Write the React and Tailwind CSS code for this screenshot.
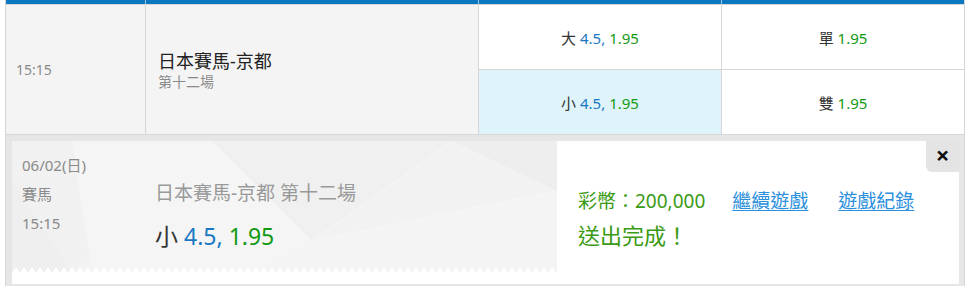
import React from "react";

const font = { fontFamily: '"Noto Sans", "Noto Sans CJK TC", sans-serif' };

function Odds({ label, line, price, big }) {
  return (
    <span className={big ? "text-[23px]" : "text-[15px]"}>
      <span className="text-[#333]">{label} </span>
      {line && <span className="text-[#1a78c2]">{line}, </span>}
      <span className="text-[#129a12]">{price}</span>
    </span>
  );
}

function Zigzag() {
  const teeth = [];
  for (let i = 0; i < 70; i++) {
    teeth.push(`${i * 8},6 ${i * 8 + 4},0 ${i * 8 + 8},6`);
  }
  return (
    <svg className="absolute left-0 bottom-0" width="545" height="6" viewBox="0 0 545 6">
      {teeth.map((p, i) => (
        <polygon key={i} points={p} fill="#ffffff" />
      ))}
    </svg>
  );
}

function Facets() {
  return (
    <svg className="absolute inset-0" width="545" height="132" viewBox="0 0 545 132">
      <rect width="545" height="132" fill="#f3f3f3" />
      <polygon points="0,0 210,0 60,132 0,132" fill="#f1f1f1" />
      <polygon points="60,0 230,0 300,100 240,132 80,132" fill="#f5f5f5" />
      <polygon points="200,0 440,0 300,100" fill="#f0f0f0" />
      <polygon points="300,100 545,50 545,132 240,132" fill="#f4f4f4" />
      <polygon points="440,0 545,0 545,50" fill="#eeeeee" />
      <polygon points="0,40 60,132 0,132" fill="#efefef" />
      <polygon points="300,100 440,0 545,50" fill="#f2f2f2" />
      <g stroke="#f6f6f6" strokeWidth="1" fill="none">
        <line x1="60" y1="0" x2="200" y2="132" />
        <line x1="300" y1="100" x2="240" y2="132" />
        <line x1="440" y1="0" x2="300" y2="100" />
        <line x1="300" y1="100" x2="545" y2="50" />
      </g>
    </svg>
  );
}

export default function App() {
  return (
    <div className="w-[965px] h-[286px] bg-white overflow-hidden pl-[5px]" style={font}>
      <div className="w-[960px] h-[286px] border-x border-[#d6d6d6] flex flex-col">
        <div className="grid grid-cols-[139px_332px_242px_242px] gap-x-px bg-[#9ec6e4] h-[4px]">
          <div className="bg-[#0a78c0]" />
          <div className="bg-[#0a78c0]" />
          <div className="bg-[#0a78c0]" />
          <div className="bg-[#0a78c0]" />
        </div>
        <div className="grid grid-cols-[139px_332px_242px_242px] grid-rows-[64px_64px] gap-px bg-[#d6d6d6] border-y border-[#d6d6d6]">
          <div className="row-span-2 bg-[#f4f4f4] flex items-center pl-[10px] text-[14px] text-[#8a8a8a]">
            15:15
          </div>
          <div className="row-span-2 bg-[#f4f4f4] flex flex-col justify-center pl-[12px]">
            <div className="text-[18px] leading-[24px] text-[#222]">日本賽馬-京都</div>
            <div className="text-[14px] leading-[18px] text-[#8a8a8a]">第十二場</div>
          </div>
          <div className="bg-white flex items-center justify-center pt-[3px]">
            <Odds label="大" line="4.5" price="1.95" />
          </div>
          <div className="bg-white flex items-center justify-center pt-[3px]">
            <Odds label="單" price="1.95" />
          </div>
          <div className="bg-[#dff3fb] flex items-center justify-center pt-[3px]">
            <Odds label="小" line="4.5" price="1.95" />
          </div>
          <div className="bg-white flex items-center justify-center pt-[3px]">
            <Odds label="雙" price="1.95" />
          </div>
        </div>
        <div className="flex-1 bg-[#e6e6e6] pl-[6px] pr-[5px] pt-[6px] pb-[2px]">
          <div className="relative h-full bg-white flex">
            <div className="relative w-[545px] h-[132px] overflow-hidden">
              <Facets />
              <Zigzag />
              <div className="relative flex pl-[10px] pt-[10px]">
                <div className="w-[133px] text-[15px] text-[#8a8a8a] leading-[29px]">
                  <div>06/02(日)</div>
                  <div>賽馬</div>
                  <div>15:15</div>
                </div>
                <div className="pt-[29px]">
                  <div className="text-[19px] leading-[26px] text-[#999]">日本賽馬-京都 第十二場</div>
                  <div className="mt-[14px] leading-[32px]">
                    <Odds label="小" line="4.5" price="1.95" big />
                  </div>
                </div>
              </div>
            </div>
            <div className="pl-[21px] pt-[47px]">
              <div className="flex items-center text-[19px] leading-[26px]">
                <span className="text-[#3a9a14]">彩幣：200,000</span>
                <a href="#" className="ml-[27px] text-[#2a8fdc] underline underline-offset-2">繼續遊戲</a>
                <a href="#" className="ml-[30px] text-[#2a8fdc] underline underline-offset-2">遊戲紀錄</a>
              </div>
              <div className="mt-[6px] text-[22px] leading-[30px] text-[#3a9a14]">送出完成！</div>
            </div>
            <button className="absolute top-0 right-0 w-[33px] h-[31px] bg-[#e4e4e4] rounded-bl-[6px] flex items-center justify-center text-[24px] font-bold text-[#111] leading-none pb-[4px]">
              ×
            </button>
          </div>
        </div>
      </div>
    </div>
  );
}
